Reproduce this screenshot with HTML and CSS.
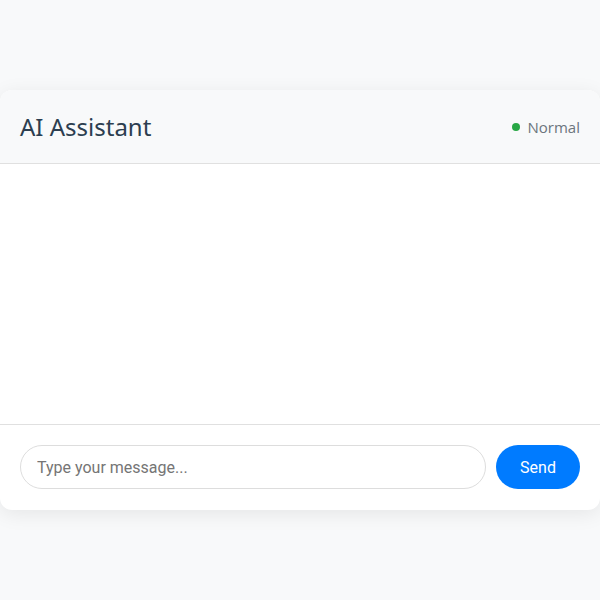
FILE: index.html
```html
<!DOCTYPE html>
<html>
<head>
<meta charset="utf-8">
<link rel="stylesheet" href="styles.css">
</head>
<body>
<div class="chat">
  <div class="chat-header">
    <h1 class="title">AI Assistant</h1>
    <div class="status"><span class="dot"></span><span class="status-text">Normal</span></div>
  </div>
  <div class="messages"></div>
  <div class="input-area">
    <input class="msg-input" type="text" placeholder="Type your message...">
    <button class="send">Send</button>
  </div>
</div>
</body>
</html>
```
FILE: styles.css
```css
html, body {
  margin: 0;
  padding: 0;
}
body {
  background: #f8f9fa;
  height: 100vh;
  display: flex;
  align-items: center;
  justify-content: center;
  font-family: "Noto Sans", "Open Sans", sans-serif;
}
.chat {
  width: 100%;
  max-width: 600px;
  height: 420px;
  background: #ffffff;
  border-radius: 12px;
  box-shadow: 0 4px 20px rgba(0, 0, 0, 0.08);
  display: flex;
  flex-direction: column;
  overflow: hidden;
}
.chat-header {
  height: 74px;
  box-sizing: border-box;
  background: #f8f9fa;
  border-bottom: 1px solid #e0e0e0;
  display: flex;
  align-items: center;
  justify-content: space-between;
  padding: 0 20px;
}
.title {
  margin: 0;
  font-size: 24px;
  font-weight: 400;
  color: #2c3e50;
}
.status {
  display: flex;
  align-items: center;
  gap: 8px;
  font-family: "Open Sans", "Noto Sans", sans-serif;
  font-size: 15px;
  color: #6c757d;
}
.dot {
  width: 8px;
  height: 8px;
  border-radius: 50%;
  background: #28a745;
}
.messages {
  flex: 1;
}
.input-area {
  border-top: 1px solid #e0e0e0;
  padding: 20px 20px 21px;
  display: flex;
  gap: 10px;
}
.msg-input {
  flex: 1;
  height: 44px;
  box-sizing: border-box;
  border: 1px solid #dddddd;
  border-radius: 22px;
  padding: 0 16px;
  font-family: Roboto, sans-serif;
  font-size: 16px;
  color: #333;
  outline: none;
}
.msg-input::placeholder {
  color: #757575;
}
.send {
  width: 84px;
  height: 44px;
  border: none;
  border-radius: 22px;
  background: #007bff;
  color: #ffffff;
  font-family: Roboto, sans-serif;
  font-size: 16px;
  cursor: pointer;
}
```
